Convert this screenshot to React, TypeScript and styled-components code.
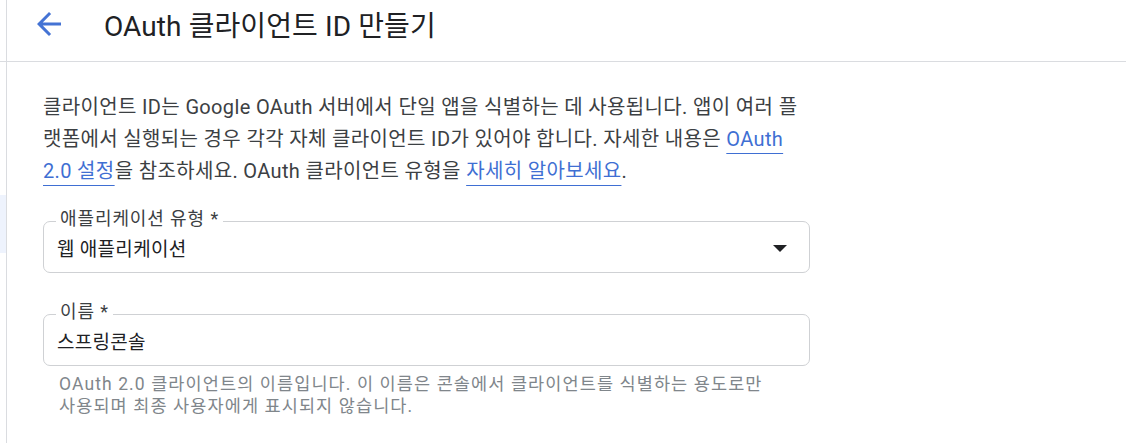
import React from "react";
import styled, { createGlobalStyle } from "styled-components";

const GlobalStyle = createGlobalStyle`
  html, body {
    margin: 0;
    padding: 0;
    background: #ffffff;
  }
  body {
    font-family: Roboto, "Noto Sans CJK KR", "Noto Sans", sans-serif;
    color: #3c4043;
  }
  * { box-sizing: border-box; }
`;

const Page = styled.div`
  display: flex;
  width: 1126px;
  height: 443px;
  overflow: hidden;
  background: #fff;
`;

const SideStrip = styled.div`
  width: 7px;
  flex: none;
  border-right: 1px solid #dadce0;
  display: flex;
  flex-direction: column;
`;

const SideTop = styled.div`
  height: 62px;
  border-bottom: 1px solid #dadce0;
`;

const SideItem = styled.div<{ $active?: boolean; $h: number }>`
  height: ${(p) => p.$h}px;
  background: ${(p) => (p.$active ? "#eef3fd" : "transparent")};
`;

const Main = styled.div`
  flex: 1;
  display: flex;
  flex-direction: column;
`;

const Header = styled.header`
  height: 62px;
  border-bottom: 1px solid #dadce0;
  display: flex;
  align-items: center;
  padding: 0 0 13px 24px;
`;

const BackButton = styled.button`
  border: none;
  background: none;
  padding: 0;
  width: 36px;
  height: 36px;
  display: flex;
  align-items: center;
  justify-content: center;
  cursor: pointer;
  color: #4473d4;
`;

const Title = styled.h1`
  margin: 0 0 0 37px;
  font-size: 28px;
  font-weight: 400;
  color: #202124;
  letter-spacing: 0.1px;
`;

const Content = styled.div`
  padding: 29px 0 0 36px;
  width: 803px;
`;

const Intro = styled.p`
  margin: 0;
  font-size: 20px;
  line-height: 32px;
  letter-spacing: 0.35px;
  color: #3c4043;
`;

const Link = styled.a`
  color: #3f6fd3;
  text-decoration: underline;
  text-underline-offset: 7px;
  text-decoration-thickness: 1px;
`;

const Field = styled.div<{ $mt: number }>`
  position: relative;
  margin-top: ${(p) => p.$mt}px;
  height: 52px;
  border: 1px solid #cfd1d4;
  border-radius: 7px;
  display: flex;
  align-items: center;
  padding: 0 22px 2px 13px;
`;

const FloatingLabel = styled.label`
  position: absolute;
  left: 12px;
  top: -15px;
  padding: 0 4px;
  background: #fff;
  font-size: 18px;
  line-height: 24px;
  letter-spacing: 0.9px;
  color: #3c4043;
`;

const Value = styled.span`
  flex: 1;
  font-size: 19px;
  letter-spacing: 0.3px;
  color: #202124;
  padding-top: 3px;
`;

const Caret = styled.span`
  width: 0;
  height: 0;
  border-left: 7px solid transparent;
  border-right: 7px solid transparent;
  border-top: 7px solid #202124;
  margin-top: 4px;
`;

const Helper = styled.p`
  margin: 7px 0 0 16px;
  font-size: 17.5px;
  line-height: 22px;
  letter-spacing: 1.1px;
  color: #80868b;
`;

export default function App() {
  return (
    <>
      <GlobalStyle />
      <Page>
        <SideStrip>
          <SideTop />
          <SideItem $h={133} />
          <SideItem $active $h={58} />
        </SideStrip>
        <Main>
          <Header>
            <BackButton aria-label="뒤로">
              <svg width="36" height="36" viewBox="0 0 24 24">
                <path
                  d="M20 11H7.83l5.59-5.59L12 4l-8 8 8 8 1.41-1.41L7.83 13H20v-2z"
                  fill="currentColor"
                />
              </svg>
            </BackButton>
            <Title>OAuth 클라이언트 ID 만들기</Title>
          </Header>
          <Content>
            <Intro>
              클라이언트 ID는 Google OAuth 서버에서 단일 앱을 식별하는 데 사용됩니다. 앱이 여러 플
              <br />
              랫폼에서 실행되는 경우 각각 자체 클라이언트 ID가 있어야 합니다. 자세한 내용은{" "}
              <Link href="#">OAuth</Link>
              <br />
              <Link href="#">2.0 설정</Link>을 참조하세요. OAuth 클라이언트 유형을{" "}
              <Link href="#">자세히 알아보세요</Link>.
            </Intro>
            <Field $mt={34}>
              <FloatingLabel>애플리케이션 유형 *</FloatingLabel>
              <Value>웹 애플리케이션</Value>
              <Caret />
            </Field>
            <Field $mt={41}>
              <FloatingLabel>이름 *</FloatingLabel>
              <Value>스프링콘솔</Value>
            </Field>
            <Helper>
              OAuth 2.0 클라이언트의 이름입니다. 이 이름은 콘솔에서 클라이언트를 식별하는 용도로만
              <br />
              사용되며 최종 사용자에게 표시되지 않습니다.
            </Helper>
          </Content>
        </Main>
      </Page>
    </>
  );
}
